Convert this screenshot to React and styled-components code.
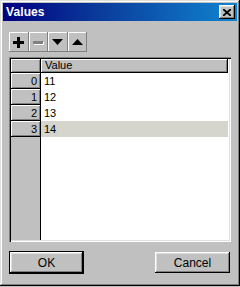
import React from "react";
import styled, { createGlobalStyle } from "styled-components";

const GlobalStyle = createGlobalStyle`
  html, body {
    margin: 0;
    padding: 0;
    background: #c0c0c0;
  }
  body {
    font-family: "Liberation Sans", Arial, sans-serif;
    font-size: 11px;
    color: #000;
  }
`;

const raised = `
  box-shadow: inset -1px -1px #000, inset 1px 1px #fff, inset -2px -2px #808080, inset 2px 2px #dfdfdf;
`;

const Window = styled.div`
  box-sizing: border-box;
  width: 240px;
  height: 286px;
  padding: 3px;
  background: #c0c0c0;
  display: flex;
  flex-direction: column;
  box-shadow: inset -1px -1px #000, inset 1px 1px #dfdfdf, inset -2px -2px #808080, inset 2px 2px #fff;
`;

const TitleBar = styled.div`
  height: 18px;
  display: flex;
  align-items: center;
  justify-content: space-between;
  padding: 0 2px 0 3px;
  background: linear-gradient(90deg, #000080 0%, #0a3a9a 40%, #1084d0 100%);
`;

const Title = styled.div`
  color: #fff;
  font-weight: bold;
  font-size: 12px;
  letter-spacing: 0.1px;
`;

const CloseButton = styled.button`
  width: 16px;
  height: 14px;
  padding: 0;
  border: none;
  background: #c0c0c0;
  display: flex;
  align-items: center;
  justify-content: center;
  ${raised}
`;

const Body = styled.div`
  flex: 1;
  display: flex;
  flex-direction: column;
  padding: 11px 6px 9px 6px;
  min-height: 0;
`;

const Toolbar = styled.div`
  display: flex;
  margin-bottom: 5px;
`;

const ToolButton = styled.button`
  box-sizing: border-box;
  width: 19.5px;
  height: 20px;
  padding: 0;
  border: none;
  background: #c0c0c0;
  display: flex;
  align-items: center;
  justify-content: center;
  box-shadow: inset -1px -1px #808080, inset 1px 1px #fff;
`;

const Grid = styled.div`
  flex: 1;
  display: grid;
  grid-template-columns: 30px 1fr;
  grid-template-rows: 14px repeat(4, 16px) 1fr;
  background: #fff;
  padding: 2px;
  box-shadow: inset 1px 1px #808080, inset 2px 2px #000, inset -1px -1px #fff, inset -2px -2px #dfdfdf;
`;

const Corner = styled.div`
  background: #c0c0c0;
  border-right: 1px solid #000;
  border-bottom: 1px solid #000;
  box-shadow: inset 1px 1px #fff, inset -1px -1px #808080;
`;

const ColHeader = styled.div`
  background: #c0c0c0;
  border-bottom: 1px solid #000;
  border-right: 1px solid #000;
  margin-right: 1px;
  box-shadow: inset 1px 1px #fff, inset -1px -1px #808080;
  display: flex;
  align-items: center;
  padding-left: 4px;
  line-height: 1;
`;

const RowHeader = styled.div`
  background: #c0c0c0;
  border-right: 1px solid #000;
  border-bottom: 1px solid #000;
  box-shadow: inset 1px 1px #fff, inset -1px -1px #808080;
  display: flex;
  align-items: center;
  justify-content: flex-end;
  padding-right: 3px;
`;

const Cell = styled.div`
  display: flex;
  align-items: center;
  padding-left: 3px;
  margin-right: 1px;
  background: ${({ $selected }) => ($selected ? "#d5d5cd" : "#fff")};
`;

const FillHeader = styled.div`
  background: #c0c0c0;
  border-right: 1px solid #000;
`;

const Footer = styled.div`
  display: flex;
  justify-content: space-between;
  align-items: center;
  margin-top: 9px;
`;

const DialogButton = styled.button`
  box-sizing: border-box;
  width: 75px;
  height: ${({ $default }) => ($default ? "23px" : "21px")};
  margin-right: ${({ $default }) => ($default ? "0" : "1px")};
  padding: 0;
  font-family: "Liberation Sans", Arial, sans-serif;
  font-size: 12px;
  color: #000;
  background: #c0c0c0;
  border: ${({ $default }) => ($default ? "1px solid #000" : "none")};
  ${raised}
`;

const rows = ["11", "12", "13", "14"];

const PlusIcon = () => (
  <svg width="11" height="11" viewBox="0 0 11 11">
    <rect x="4" y="0" width="3" height="11" fill="#000" />
    <rect x="0" y="4" width="11" height="3" fill="#000" />
  </svg>
);

const MinusIcon = () => (
  <svg width="11" height="11" viewBox="0 0 11 11">
    <rect x="1" y="5" width="10" height="3" fill="#fff" />
    <rect x="0" y="4" width="10" height="3" fill="#808080" />
  </svg>
);

const TriangleIcon = ({ up }) => (
  <svg width="11" height="7" viewBox="0 0 11 7">
    <polygon points={up ? "5.5,0 11,6 0,6" : "0,0 11,0 5.5,6"} fill="#000" />
  </svg>
);

const CloseIcon = () => (
  <svg width="8" height="7" viewBox="0 0 8 7">
    <path d="M0 0 L8 7 M8 0 L0 7" stroke="#000" strokeWidth="1.8" />
  </svg>
);

export default function App() {
  return (
    <>
      <GlobalStyle />
      <Window>
        <TitleBar>
          <Title>Values</Title>
          <CloseButton>
            <CloseIcon />
          </CloseButton>
        </TitleBar>
        <Body>
          <Toolbar>
            <ToolButton>
              <PlusIcon />
            </ToolButton>
            <ToolButton>
              <MinusIcon />
            </ToolButton>
            <ToolButton>
              <TriangleIcon />
            </ToolButton>
            <ToolButton>
              <TriangleIcon up />
            </ToolButton>
          </Toolbar>
          <Grid>
            <Corner />
            <ColHeader>Value</ColHeader>
            {rows.map((v, i) => (
              <React.Fragment key={i}>
                <RowHeader>{i}</RowHeader>
                <Cell $selected={i === 3}>{v}</Cell>
              </React.Fragment>
            ))}
            <FillHeader />
            <Cell />
          </Grid>
          <Footer>
            <DialogButton $default>OK</DialogButton>
            <DialogButton>Cancel</DialogButton>
          </Footer>
        </Body>
      </Window>
    </>
  );
}
